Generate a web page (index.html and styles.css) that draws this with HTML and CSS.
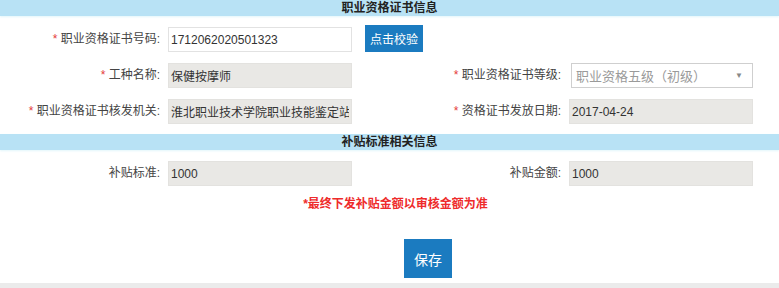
FILE: index.html
```html
<!DOCTYPE html>
<html lang="zh-CN">
<head>
  <meta charset="UTF-8" />
  <meta name="viewport" content="width=device-width, initial-scale=1.0" />
  <title>职业资格证书信息</title>
  <link rel="stylesheet" href="styles.css">
</head>
<body>
  <div class="page">
    <div class="section-title">职业资格证书信息</div>
    <div class="section-body first">
      <div class="form-row">
        <label class="label"><span class="req">*</span> 职业资格证书号码:</label>
        <div class="field field-wide">
          <input type="text" class="input" value="1712062020501323">
          <button class="btn-check">点击校验</button>
        </div>
      </div>
      <div class="form-row">
        <label class="label"><span class="req">*</span> 工种名称:</label>
        <div class="field"><input type="text" class="input readonly" value="保健按摩师" readonly></div>
        <label class="label"><span class="req">*</span> 职业资格证书等级:</label>
        <div class="field">
          <div class="select">
            <span class="select-text">职业资格五级（初级）</span>
            <span class="select-arrow">▼</span>
          </div>
        </div>
      </div>
      <div class="form-row">
        <label class="label"><span class="req">*</span> 职业资格证书核发机关:</label>
        <div class="field"><input type="text" class="input readonly" value="淮北职业技术学院职业技能鉴定站" readonly></div>
        <label class="label"><span class="req">*</span> 资格证书发放日期:</label>
        <div class="field"><input type="text" class="input readonly" value="2017-04-24" readonly></div>
      </div>
    </div>

    <div class="section-title">补贴标准相关信息</div>
    <div class="section-body">
      <div class="form-row">
        <label class="label">补贴标准:</label>
        <div class="field"><input type="text" class="input readonly" value="1000" readonly></div>
        <label class="label">补贴金额:</label>
        <div class="field"><input type="text" class="input readonly" value="1000" readonly></div>
      </div>
    </div>

    <p class="note">*最终下发补贴金额以审核金额为准</p>

    <div class="actions">
      <button class="btn-save">保存</button>
    </div>
  </div>
</body>
</html>
```

FILE: styles.css
```css
* {
  box-sizing: border-box;
}

body {
  margin: 0;
  background: #fff;
  font-family: "Liberation Sans", "Noto Sans CJK SC", sans-serif;
  font-size: 12px;
  color: #444;
}

.page {
  width: 779px;
  height: 288px;
  border-bottom: 5px solid #ebebeb;
}

.section-title {
  height: 16px;
  line-height: 16px;
  background: #b8e2f5;
  text-align: center;
  font-weight: bold;
  color: #222;
  box-shadow: 0 1px 2px #e2f6fb;
}

.section-body {
  display: flex;
  flex-direction: column;
  gap: 11px;
  padding: 11px 0 10px;
}

.section-body.first {
  padding: 9px 0 10px;
}

.form-row {
  display: grid;
  grid-template-columns: 160px 225px 160px 184px;
  column-gap: 8px;
  align-items: end;
}

.label {
  text-align: right;
  line-height: 25px;
  white-space: nowrap;
  color: #444;
}

.req {
  color: #e43a3a;
}

.field {
  display: flex;
  align-items: end;
}

.field-wide {
  grid-column: span 3;
  gap: 13px;
}

.input {
  width: 184px;
  height: 25px;
  padding: 0 2px;
  border: 1px solid #e2e2e2;
  font-family: inherit;
  font-size: 12px;
  color: #333;
  outline: none;
}

.input.readonly {
  background: #e9e8e5;
  border-color: #e3e2df;
  overflow: hidden;
}

.btn-check {
  width: 58px;
  height: 27px;
  padding: 0;
  border: none;
  background: #1b7bc0;
  color: #fff;
  font-family: inherit;
  font-size: 12px;
}

.select {
  width: 182px;
  height: 25px;
  margin-left: 2px;
  display: flex;
  align-items: center;
  justify-content: space-between;
  padding: 0 9px 0 4px;
  border: 1px solid #cfcfcf;
  background: #fff;
}

.select-text {
  color: #9a9a9a;
  font-size: 13px;
}

.select-arrow {
  color: #888;
  font-size: 8px;
}

.note {
  margin: 0;
  line-height: 16px;
  text-align: center;
  color: #ee2b2b;
  font-weight: bold;
  padding-left: 12px;
}

.actions {
  display: flex;
  justify-content: center;
  padding: 27px 0 0 77px;
}

.btn-save {
  width: 48px;
  height: 39px;
  padding: 0;
  border: none;
  background: #1b7bc0;
  color: #fff;
  font-family: inherit;
  font-size: 14px;
}
```
